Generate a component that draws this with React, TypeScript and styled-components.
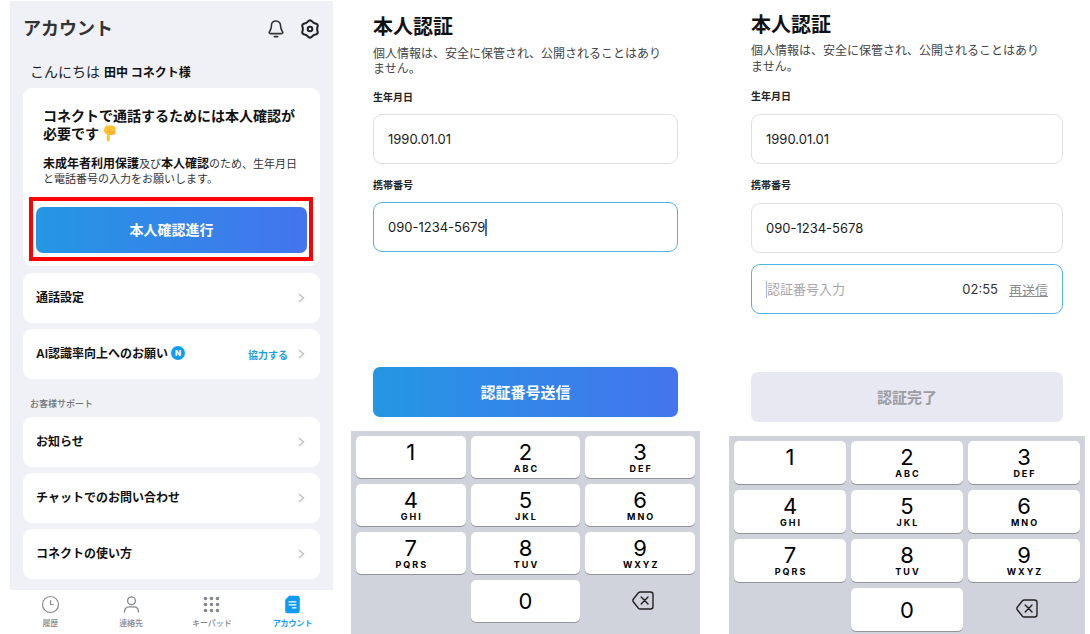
import React from 'react';
import styled, { createGlobalStyle, css } from 'styled-components';

const GlobalStyle = createGlobalStyle`
  *, *::before, *::after { box-sizing: border-box; }
  body {
    margin: 0;
    background: #fff;
    color: #111;
    font-family: Inter, "Noto Sans CJK JP", sans-serif;
  }
  h1, h2, h3, p, ul { margin: 0; padding: 0; }
  button, input { font-family: inherit; }
`;

const Page = styled.main`
  display: flex;
  min-height: 100vh;
  padding: 0 5px 0 10px;
`;

const Screen = styled.section<{ $grow: number; $gap?: number }>`
  display: flex;
  flex-direction: column;
  flex: ${(p) => p.$grow} 1 0;
  min-width: 0;
  margin-left: ${(p) => p.$gap ?? 0}px;
`;

/* ---------- Account screen ---------- */

const AccountBody = styled.div`
  flex: 1;
  margin-top: 1px;
  padding: 12px 13px 10px;
  background: #eff1f6;
`;

const TopBar = styled.header`
  display: flex;
  align-items: center;
  justify-content: space-between;
  height: 32px;
`;

const ScreenTitle = styled.h1`
  color: #333;
  font-size: 18px;
  font-weight: 600;
  line-height: 28px;
`;

const TopActions = styled.div`
  display: flex;
  align-items: center;
  gap: 16px;
`;

const IconButton = styled.button`
  display: flex;
  align-items: center;
  justify-content: center;
  padding: 0;
  border: 0;
  background: none;
  color: #222;
`;

const Greeting = styled.p`
  margin: 17px 0 6px 7px;
  font-size: 14px;
  line-height: 20px;
  color: #222;

  strong {
    font-size: 12px;
    font-weight: 700;
    line-height: 1;
    color: #111;
  }
`;

const Card = styled.section`
  padding: 19px 7px 5px 6px;
  border-radius: 9px;
  background: #fff;
`;

const CardTitle = styled.h2`
  margin-left: 14px;
  font-size: 14px;
  font-weight: 600;
  line-height: 18px;

  svg { vertical-align: -3px; }
`;

const CardText = styled.p`
  margin: 14px 0 10px 14px;
  font-size: 11px;
  line-height: 15px;
  color: #333;
  white-space: nowrap;

  strong {
    font-size: 12px;
    font-weight: 700;
    line-height: 1;
    color: #111;
  }
`;

const Highlight = styled.div`
  padding: 6px 2px 4px 3px;
  border: 4px solid #fe0000;
`;

const ActionButton = styled.button<{ $size?: 'small' }>`
  display: block;
  width: 100%;
  height: 50px;
  padding: 0 0 2px;
  border: 0;
  border-radius: 7px;
  background: linear-gradient(90deg, #2497e3, #4474ee);
  color: #fff;
  font-size: 15px;
  font-weight: 600;

  ${(p) => p.$size === 'small' && css`
    height: 46px;
    font-size: 14px;
  `}

  &:disabled {
    background: #e8e8f2;
    color: #9c9ca1;
  }
`;

const MenuList = styled.ul`
  display: flex;
  flex-direction: column;
  gap: 6px;
  margin-top: 7px;
  list-style: none;
`;

const MenuLink = styled.a`
  display: flex;
  align-items: center;
  height: 50px;
  padding: 0 15px 0 13px;
  border-radius: 9px;
  background: #fff;
  color: #111;
  font-size: 12px;
  font-weight: 600;
  text-decoration: none;

  > svg:last-child { margin-left: auto; }
`;

const MenuLabel = styled.span`
  display: flex;
  align-items: center;
  padding-bottom: 3px;
`;

const MenuAction = styled.span`
  margin: 0 10px 0 auto;
  color: #1a9cdf;
  font-size: 10px;

  & + svg:last-child { margin-left: 0; }
`;

const NewBadge = styled.span`
  display: flex;
  align-items: center;
  justify-content: center;
  width: 14px;
  height: 14px;
  margin-left: 3px;
  border-radius: 50%;
  background: #0f9cf5;
  color: #fff;
  font-size: 8px;
  font-weight: 800;
`;

const SectionLabel = styled.h3`
  margin: 18px 0 0 7px;
  color: #6f7278;
  font-size: 9px;
  font-weight: 500;
  line-height: 14px;

  & + ${MenuList} { margin-top: 6px; }
`;

const TabBar = styled.nav`
  display: grid;
  grid-template-columns: repeat(4, 1fr);
  height: 44px;
  padding-top: 5px;
  background: #fff;
`;

const Tab = styled.a<{ $active?: boolean }>`
  display: flex;
  flex-direction: column;
  align-items: center;
  gap: 3px;
  color: ${(p) => (p.$active ? '#0f9cf5' : '#85878f')};
  font-size: 8px;
  font-weight: ${(p) => (p.$active ? 600 : 500)};
  line-height: 12px;
  text-decoration: none;
  white-space: nowrap;
`;

/* ---------- Verification screens ---------- */

const Form = styled.form<{ $top: number }>`
  display: flex;
  flex-direction: column;
  flex: 1;
  padding: ${(p) => p.$top}px 22px 14px;

  ${ActionButton} { margin-top: auto; }
`;

const FormTitle = styled.h2`
  font-size: 20px;
  font-weight: 600;
  line-height: 28px;
`;

const FormText = styled.p<{ $line: number }>`
  margin-top: ${(p) => (p.$line === 15 ? 5 : 4)}px;
  color: #444;
  font-size: 12px;
  line-height: ${(p) => p.$line}px;
  white-space: nowrap;
`;

const FieldLabel = styled.label<{ $gap: number }>`
  margin: 14px 0 ${(p) => p.$gap}px;
  color: #222;
  font-size: 10px;
  font-weight: 600;
  line-height: 14px;
`;

const Field = styled.div<{ $active?: boolean; $gap?: number }>`
  display: flex;
  align-items: center;
  height: 50px;
  margin-top: ${(p) => p.$gap ?? 0}px;
  padding: 0 14px;
  border: 1px solid ${(p) => (p.$active ? '#4fb3e4' : '#dfdfe1')};
  border-radius: 9px;
  background: #fff;
`;

const FieldInput = styled.input<{ $fit?: boolean }>`
  flex: ${(p) => (p.$fit ? '0 0 auto' : '1 1 0')};
  field-sizing: ${(p) => (p.$fit ? 'content' : 'fixed')};
  min-width: 0;
  padding: 0;
  border: 0;
  outline: 0;
  background: none;
  color: #1a1a1a;
  font-size: 13px;

  &::placeholder { color: #a6a6ab; opacity: 1; }
`;

const Caret = styled.span<{ $soft?: boolean }>`
  flex: none;
  width: ${(p) => (p.$soft ? 1 : 2)}px;
  height: 17px;
  background: ${(p) => (p.$soft ? '#a9b5f5' : '#4169e1')};
`;

const Timer = styled.span`
  margin-right: 11px;
  color: #333;
  font-size: 13px;
`;

const ResendButton = styled.button`
  padding: 0;
  border: 0;
  background: none;
  color: #8c8c91;
  font-size: 13px;
  text-decoration: underline;
`;

const Keypad = styled.div<{ $key: number; $height: number }>`
  display: grid;
  grid-template-columns: repeat(3, 1fr);
  grid-auto-rows: ${(p) => p.$key}px;
  gap: 6px 5px;
  min-height: ${(p) => p.$height}px;
  padding: 5px 5px 0;
  background: #d0d3db;
`;

const Key = styled.button<{ $single?: boolean }>`
  display: flex;
  flex-direction: column;
  align-items: center;
  justify-content: ${(p) => (p.$single ? 'center' : 'flex-start')};
  padding: ${(p) => (p.$single ? 0 : '4px')} 0 0;
  border: 0;
  border-radius: 5px;
  background: #fff;
  box-shadow: 0 1px 0 #929499;
  color: #000;
  font-size: 22px;
  line-height: 24px;
`;

const KeyLetters = styled.span`
  padding-left: 2px;
  font-size: 9px;
  font-weight: 700;
  line-height: 10px;
  letter-spacing: 2px;
`;

const DeleteKey = styled.button`
  display: flex;
  grid-column: 3;
  align-items: center;
  justify-content: center;
  padding: 0 0 2px 6px;
  border: 0;
  background: none;
  color: #222;
`;

/* ---------- Icons ---------- */

const BellIcon = () => (
  <svg width="16" height="18" viewBox="0 0 16 18" fill="none" stroke="#333" strokeWidth="1.6" strokeLinecap="round" strokeLinejoin="round">
    <path d="M8 1C5 1 3.4 3.2 3.4 6C3.4 9 2.6 10 1.6 11.5C.8 12.7 1.2 13.6 2.6 13.6H13.4C14.8 13.6 15.2 12.7 14.4 11.5C13.4 10 12.6 9 12.6 6C12.6 3.2 11 1 8 1Z" />
    <path d="M6.3 16.6H9.7" />
  </svg>
);

const SettingsIcon = () => (
  <svg width="20" height="20" viewBox="0 0 20 20" fill="none" stroke="currentColor" strokeWidth="2" strokeLinejoin="round">
    <path d="M8.58 1.92Q10 .6 11.42 1.92Q13.3 4.28 16.28 4.73Q18.14 5.3 17.71 7.2Q16.6 10 17.71 12.8Q18.14 14.7 16.28 15.27Q13.3 15.72 11.42 18.08Q10 19.4 8.58 18.08Q6.7 15.72 3.72 15.27Q1.86 14.7 2.29 12.8Q3.4 10 2.29 7.2Q1.86 5.3 3.72 4.73Q6.7 4.28 8.58 1.92Z" />
    <circle cx="10" cy="10" r="2.3" />
  </svg>
);

const PointDownIcon = () => (
  <svg width="13" height="17" viewBox="0 0 13 17" role="img" aria-label="下">
    <path d="M2 2.2Q2 .4 4 .4H9Q12.6 .6 12.6 4V7.6Q12.6 9.6 10.9 9.4Q10.2 10.2 9 9.7Q8.2 10.3 6.8 9.8V14.8Q6.8 16.5 5.3 16.5T3.8 14.8V9.4Q1.6 8.3 .8 6.3Q.3 5.2 .9 4.3Z" fill="#fcc333" />
    <path d="M6.8 9.6V6.6M9 9.4V6.6M11 9.2V6.8M4.2 6.8Q6.5 6.6 6.8 4.6" fill="none" stroke="#e0922b" strokeWidth=".6" strokeLinecap="round" />
  </svg>
);

const ChevronIcon = () => (
  <svg width="7" height="10" viewBox="0 0 7 10" fill="none" stroke="#bfc2c7" strokeWidth="1.5">
    <path d="M1 1L5.5 5L1 9" />
  </svg>
);

const ClockIcon = () => (
  <svg width="19" height="19" viewBox="0 0 19 19" fill="none" stroke="currentColor" strokeWidth="1.2" strokeLinecap="round" strokeLinejoin="round">
    <circle cx="9.5" cy="9.5" r="8" />
    <path d="M9.5 5.5V9.5H12.2" />
  </svg>
);

const PersonIcon = () => (
  <svg width="19" height="19" viewBox="0 0 19 19" fill="none" stroke="currentColor" strokeWidth="1.3" strokeLinecap="round">
    <circle cx="9.5" cy="5.8" r="3.9" />
    <path d="M2.5 17C2.5 13.6 4.3 11.8 7.2 11.8H11.8C14.7 11.8 16.5 13.6 16.5 17" />
  </svg>
);

const DotsIcon = () => (
  <svg width="19" height="19" viewBox="0 0 19 19" fill="currentColor">
    {[3.5, 9.5, 15.5].map((cy) =>
      [3.5, 9.5, 15.5].map((cx) => <circle key={`${cx}-${cy}`} cx={cx} cy={cy} r="1.8" />)
    )}
  </svg>
);

const DocumentIcon = () => (
  <svg width="19" height="19" viewBox="0 0 19 19">
    <path d="M6.2 .8H14.5Q16.8 .8 16.8 3V16Q16.8 18.2 14.5 18.2H4.5Q2.2 18.2 2.2 16V4.8Z" fill="currentColor" />
    <path d="M6 6.8H13M6 9.8H13M9.5 12.8H13" stroke="#fff" strokeWidth="1.2" strokeLinecap="round" />
  </svg>
);

const BackspaceIcon = () => (
  <svg width="22" height="19" viewBox="0 0 22 19" fill="none" stroke="currentColor" strokeWidth="1.4" strokeLinecap="round" strokeLinejoin="round">
    <path d="M8.3 1H18.5Q21 1 21 3.5V15.5Q21 18 18.5 18H8.3Q7.2 18 6.4 17.2L1.3 10.8Q.4 9.5 1.3 8.2L6.4 1.8Q7.2 1 8.3 1Z" />
    <path d="M9.2 6L16 13M16 6L9.2 13" />
  </svg>
);

/* ---------- Composition ---------- */

const keys: Array<[string, string]> = [
  ['1', ''], ['2', 'ABC'], ['3', 'DEF'],
  ['4', 'GHI'], ['5', 'JKL'], ['6', 'MNO'],
  ['7', 'PQRS'], ['8', 'TUV'], ['9', 'WXYZ'],
];

const ZeroKey = styled(Key)`
  grid-column: 2;
`;

function NumberPad({ keyHeight, height }: { keyHeight: number; height: number }) {
  return (
    <Keypad $key={keyHeight} $height={height}>
      {keys.map(([digit, letters]) => (
        <Key key={digit} type="button">
          {digit}
          {letters && <KeyLetters>{letters}</KeyLetters>}
        </Key>
      ))}
      <ZeroKey type="button" $single>0</ZeroKey>
      <DeleteKey type="button" aria-label="削除"><BackspaceIcon /></DeleteKey>
    </Keypad>
  );
}

function FormIntro({ line }: { line: number }) {
  return (
    <>
      <FormTitle>本人認証</FormTitle>
      <FormText $line={line}>
        個人情報は、安全に保管され、公開されることはあり<br />ません。
      </FormText>
    </>
  );
}

function MenuRow({ href, label, isNew, action }: { href: string; label: string; isNew?: boolean; action?: string }) {
  return (
    <li>
      <MenuLink href={href}>
        <MenuLabel>
          {label}
          {isNew && <NewBadge>N</NewBadge>}
        </MenuLabel>
        {action && <MenuAction>{action}</MenuAction>}
        <ChevronIcon />
      </MenuLink>
    </li>
  );
}

function AccountScreen() {
  return (
    <Screen $grow={323}>
      <AccountBody>
        <TopBar>
          <ScreenTitle>アカウント</ScreenTitle>
          <TopActions>
            <IconButton type="button" aria-label="通知"><BellIcon /></IconButton>
            <IconButton type="button" aria-label="設定"><SettingsIcon /></IconButton>
          </TopActions>
        </TopBar>
        <Greeting>こんにちは <strong>田中 コネクト様</strong></Greeting>
        <Card>
          <CardTitle>
            コネクトで通話するためには本人確認が<br />必要です <PointDownIcon />
          </CardTitle>
          <CardText>
            <strong>未成年者利用保護</strong>及び<strong>本人確認</strong>のため、生年月日<br />
            と電話番号の入力をお願いします。
          </CardText>
          <Highlight>
            <ActionButton type="button" $size="small">本人確認進行</ActionButton>
          </Highlight>
        </Card>
        <MenuList>
          <MenuRow href="#call" label="通話設定" />
          <MenuRow href="#ai" label="AI認識率向上へのお願い" isNew action="協力する" />
        </MenuList>
        <SectionLabel>お客様サポート</SectionLabel>
        <MenuList>
          <MenuRow href="#news" label="お知らせ" />
          <MenuRow href="#chat" label="チャットでのお問い合わせ" />
          <MenuRow href="#guide" label="コネクトの使い方" />
        </MenuList>
      </AccountBody>
      <TabBar>
        <Tab href="#history"><ClockIcon />履歴</Tab>
        <Tab href="#contacts"><PersonIcon />連絡先</Tab>
        <Tab href="#keypad"><DotsIcon />キーパッド</Tab>
        <Tab href="#account" $active><DocumentIcon />アカウント</Tab>
      </TabBar>
    </Screen>
  );
}

function SendCodeScreen() {
  return (
    <Screen $grow={349} $gap={18}>
      <Form $top={13}>
        <FormIntro line={15} />
        <FieldLabel htmlFor="birth-a" $gap={10}>生年月日</FieldLabel>
        <Field><FieldInput id="birth-a" defaultValue="1990.01.01" /></Field>
        <FieldLabel htmlFor="phone-a" $gap={10}>携帯番号</FieldLabel>
        <Field $active>
          <FieldInput id="phone-a" $fit defaultValue="090-1234-5679" />
          <Caret />
        </Field>
        <ActionButton type="button">認証番号送信</ActionButton>
      </Form>
      <NumberPad keyHeight={42} height={203} />
    </Screen>
  );
}

function EnterCodeScreen() {
  return (
    <Screen $grow={356} $gap={29}>
      <Form $top={11}>
        <FormIntro line={16} />
        <FieldLabel htmlFor="birth-b" $gap={11}>生年月日</FieldLabel>
        <Field><FieldInput id="birth-b" defaultValue="1990.01.01" /></Field>
        <FieldLabel htmlFor="phone-b" $gap={11}>携帯番号</FieldLabel>
        <Field><FieldInput id="phone-b" defaultValue="090-1234-5678" /></Field>
        <Field $active $gap={11}>
          <Caret $soft />
          <FieldInput aria-label="認証番号" placeholder="認証番号入力" />
          <Timer>02:55</Timer>
          <ResendButton type="button">再送信</ResendButton>
        </Field>
        <ActionButton type="button" disabled>認証完了</ActionButton>
      </Form>
      <NumberPad keyHeight={43} height={198} />
    </Screen>
  );
}

export default function App() {
  return (
    <>
      <GlobalStyle />
      <Page>
        <AccountScreen />
        <SendCodeScreen />
        <EnterCodeScreen />
      </Page>
    </>
  );
}
